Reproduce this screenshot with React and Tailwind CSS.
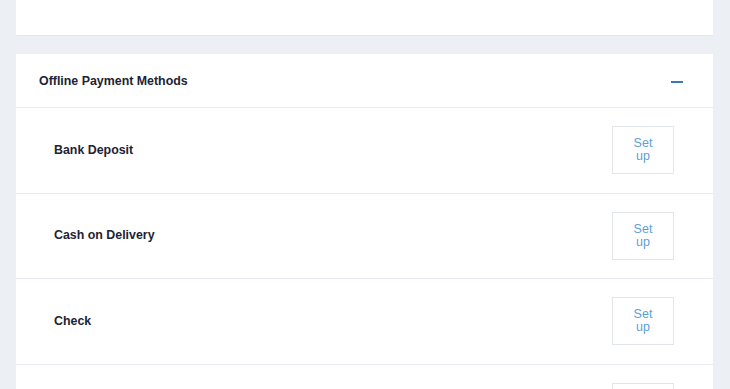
export default function App() {
  const rows = ["Bank Deposit", "Cash on Delivery", "Check", ""];
  return (
    <div className="w-[730px] h-[389px] overflow-hidden bg-[#eceff3] px-[16px] flex flex-col" style={{ fontFamily: '"Liberation Sans", Arial, sans-serif' }}>
      <div className="w-[697px] h-[36px] shrink-0 bg-white border-b border-[#e3e7ec]" />
      <div className="h-[18px] shrink-0" />
      <div className="w-[697px] bg-white shrink-0 flex flex-col">
        <div className="h-[54px] flex items-center justify-between pl-[23px] pr-[29px] border-b border-[#e6eaef]">
          <span className="text-[12.4px] font-bold text-[#1d2333] pt-[2px]">Offline Payment Methods</span>
          <span className="block w-[12px] h-[2px] bg-[#3d78b6] mt-[2px] mr-[1px]" />
        </div>
        {rows.map((r, i) => (
          <div key={i} className="h-[85.5px] shrink-0 flex items-center justify-between pl-[38px] pr-[38px] border-b border-[#e6eaef]">
            <span className="text-[12.4px] font-bold text-[#1d2333]">{r}</span>
            <button className="w-[62px] h-[48px] mr-[1px] border border-[#e2e6eb] bg-white text-[#5c9fd6] text-[12.5px] leading-[13px] flex items-center justify-center text-center">
              {r ? (<>Set<br />up</>) : null}
            </button>
          </div>
        ))}
      </div>
    </div>
  );
}
